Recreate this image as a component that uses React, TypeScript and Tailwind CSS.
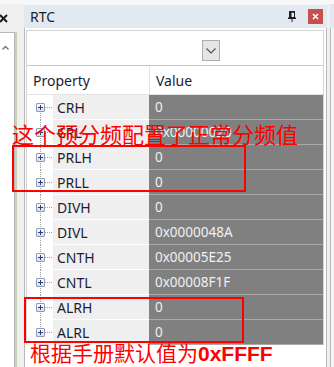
import React from "react";

const rows: { name: string; value: string }[] = [
  { name: "CRH", value: "0" },
  { name: "CRL", value: "0x00000020" },
  { name: "PRLH", value: "0" },
  { name: "PRLL", value: "0" },
  { name: "DIVH", value: "0" },
  { name: "DIVL", value: "0x0000048A" },
  { name: "CNTH", value: "0x00005E25" },
  { name: "CNTL", value: "0x00008F1F" },
  { name: "ALRH", value: "0" },
  { name: "ALRL", value: "0" },
];

function TreeCell({ first, last }: { first: boolean; last: boolean }) {
  return (
    <svg width="26" height="25" viewBox="0 0 26 25" className="block shrink-0">
      <defs>
        <linearGradient id="pb" x1="0" y1="0" x2="0" y2="1">
          <stop offset="0" stopColor="#ffffff" />
          <stop offset="1" stopColor="#d6dce6" />
        </linearGradient>
      </defs>
      <line
        x1="13.5"
        y1={first ? 8 : 0}
        x2="13.5"
        y2={last ? 17 : 25}
        stroke="#a0a0a0"
        strokeWidth="1"
        strokeDasharray="1 1"
      />
      <line x1="18" y1="12.5" x2="28" y2="12.5" stroke="#a0a0a0" strokeWidth="1" strokeDasharray="1 1" />
      <rect x="9.5" y="8.5" width="8" height="8" fill="url(#pb)" stroke="#8f9bb3" strokeWidth="1" rx="0.5" />
      <line x1="11" y1="12.5" x2="16" y2="12.5" stroke="#2b3c7a" strokeWidth="1" />
      <line x1="13.5" y1="10" x2="13.5" y2="15" stroke="#2b3c7a" strokeWidth="1" />
    </svg>
  );
}

export default function App() {
  return (
    <div
      className="relative w-[334px] h-[367px] overflow-hidden bg-[#f0f0f0]"
      style={{ fontFamily: '"Noto Sans", "Noto Sans CJK SC", sans-serif' }}
    >
      <div className="h-[4px] bg-[#f7f7f7]" />
      <div className="flex h-[363px]">
        {/* left panel */}
        <div className="w-[17px] flex flex-col">
          <div className="h-[28px] flex items-start pt-[10px]">
            <svg width="9" height="9" viewBox="0 0 9 9" className="block -ml-[1px]">
              <path d="M1 1 L8 8 M8 1 L1 8" stroke="#1e1e1e" strokeWidth="2" />
            </svg>
          </div>
          <div className="flex-1 flex">
            <div className="w-[15px] bg-white border-t border-r border-[#b8b8b8] pt-[12px] pl-[2px]">
              <svg width="7" height="5" viewBox="0 0 7 5" className="block">
                <path d="M0.5 4.5 L3.5 1.5 L6.5 4.5" stroke="#707070" strokeWidth="1.3" fill="none" />
              </svg>
            </div>
            <div className="w-[2px] bg-[#c6d2b4]" />
          </div>
        </div>
        <div className="w-[7px]" />
        {/* RTC panel */}
        <div className="w-[303px] flex flex-col">
          <div className="h-[24px] bg-[#e3e9f1] border-t border-[#f2f5f9] flex items-center pl-[6px]">
            <span className="text-[14px] text-[#1e1e1e] leading-none">RTC</span>
            <div className="flex-1" />
            <svg width="10" height="11" viewBox="0 0 10 11" className="block mr-[11px]">
              <rect x="2" y="0" width="6" height="1.5" fill="#1e1e1e" />
              <rect x="2.5" y="1" width="5" height="5.5" fill="none" stroke="#1e1e1e" strokeWidth="1" />
              <rect x="2.5" y="1" width="2" height="5.5" fill="#1e1e1e" />
              <rect x="1" y="6.5" width="8" height="1.5" fill="#1e1e1e" />
              <rect x="4.5" y="8" width="1" height="3" fill="#1e1e1e" />
            </svg>
            <div className="w-[15px] h-[15px] bg-[#c94f4f] flex items-center justify-center mr-[4px]">
              <svg width="7" height="7" viewBox="0 0 7 7" className="block">
                <path d="M1 1 L6 6 M6 1 L1 6" stroke="#ffffff" strokeWidth="1.6" />
              </svg>
            </div>
          </div>
          <div className="flex-1 bg-white border-l border-r border-[#b8b8b8] pl-[1px] pr-[1px] pt-[2px] flex flex-col">
            <div className="w-[298px] border-t border-l border-r border-[#d4d4d4] flex flex-col">
              {/* dropdown row */}
              <div className="h-[35px] border-b border-[#c8c8c8] flex items-start pt-[9px] pl-[175px]">
                <div className="w-[18px] h-[21px] bg-[#e5e5e5] border border-[#adadad] flex items-center justify-center">
                  <svg width="10" height="6" viewBox="0 0 10 6" className="block">
                    <path d="M0.5 0.5 L5 5 L9.5 0.5" stroke="#505050" strokeWidth="1.1" fill="none" />
                  </svg>
                </div>
              </div>
              {/* header */}
              <div className="h-[29px] flex border-b border-[#e3e3e3] text-[14px] text-[#1c1c34]">
                <div className="w-[122px] flex items-center pl-[6px]">Property</div>
                <div className="flex-1 flex items-center pl-[6px] border-l border-[#e3e3e3]">Value</div>
              </div>
              {/* rows */}
              {rows.map((r, i) => (
                <div key={r.name} className="h-[25px] flex">
                  <TreeCell first={i === 0} last={i === rows.length - 1} />
                  <div className="w-[96px] bg-[#efefef] border-b border-white flex items-center pl-[4px] text-[14px] text-[#1c1c34]">
                    {r.name}
                  </div>
                  <div className="flex-1 bg-[#808080] border-b border-[#a9a9a9] flex items-center pl-[6px] text-[13.5px] text-[#f0f0f0]">
                    {r.value}
                  </div>
                </div>
              ))}
            </div>
          </div>
        </div>
        <div className="w-[3px]" />
        {/* right panel edge */}
        <div className="flex-1 flex flex-col">
          <div className="h-[24px] bg-[#e3e9f1]" />
          <div className="flex-1 bg-[#f7f7f7] border-l border-[#b8b8b8]" />
        </div>
      </div>

      {/* red annotations */}
      <div
        className="absolute left-[12px] top-[120px] text-[22px] leading-[26px] text-[#ff0000] whitespace-nowrap"
        style={{ fontFamily: '"Noto Sans CJK SC", sans-serif' }}
      >
        这个预分频配置了正常分频值
      </div>
      <div className="absolute left-[12px] top-[145px] w-[234px] h-[47px] border-2 border-[#ff0000]" />
      <div className="absolute left-[24px] top-[297px] w-[220px] h-[46px] border-2 border-[#ff0000]" />
      <div
        className="absolute left-[30px] top-[340px] text-[21px] leading-[25px] text-[#ff0000] whitespace-nowrap"
        style={{ fontFamily: '"Noto Sans CJK SC", sans-serif' }}
      >
        根据手册默认值为
        <span className="font-bold" style={{ fontFamily: '"Liberation Sans", sans-serif' }}>
          0xFFFF
        </span>
      </div>
    </div>
  );
}
